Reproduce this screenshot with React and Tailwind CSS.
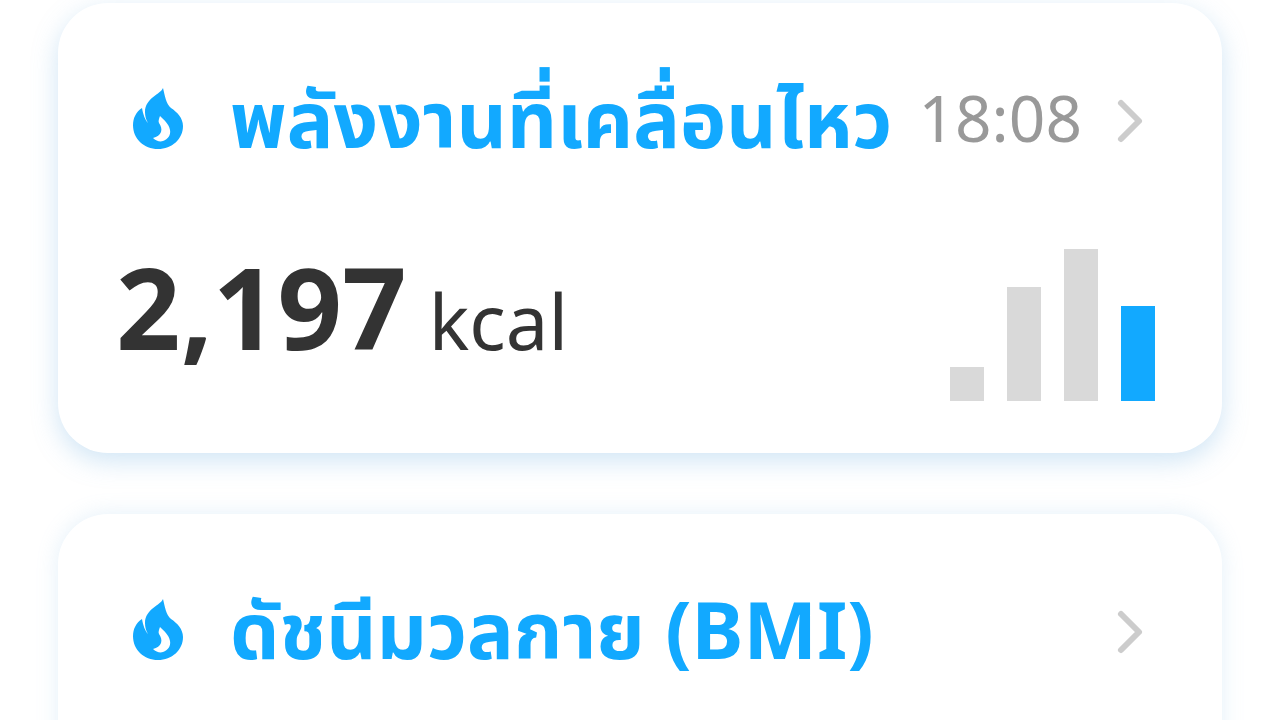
import { ChevronRight } from 'lucide-react';

const FONT = "font-['Noto_Sans','Noto_Sans_Thai','Noto_Sans_CJK_SC',sans-serif]";

const BARS = [
  { height: 'h-[34px]', color: 'bg-[#d9d9d9]' },
  { height: 'h-[114px]', color: 'bg-[#d9d9d9]' },
  { height: 'h-[152px]', color: 'bg-[#d9d9d9]' },
  { height: 'h-[95px]', color: 'bg-[#12a9ff]' },
];

function Flame() {
  return (
    <svg width="50" height="61" viewBox="0 0 50 61" className="shrink-0 ml-[1px]">
      <path
        fill="#12a9ff"
        fillRule="evenodd"
        d="M30 0C28 6 12 10 12 24C12 28 13 32 15 35C12 32 10 26 9 20C3 24 0 30 0 37C0 51 11 61 25 61C39 61 50 51 50 38C50 30 44 24 38 20C33 16 32 8 30 0ZM27 28C26 31 25 33 26 35C28 38 29 41 28 44C27 47 24 49 20 50C23 53 27 54 30 53C35 51 38 47 37 42C36 36 31 32 27 28Z"
      />
    </svg>
  );
}

function CardHeader({ title, time }) {
  return (
    <div className="flex items-center">
      <Flame />
      <span className="ml-[47px] text-[78px] leading-[84px] font-bold text-[#12a9ff] whitespace-nowrap">{title}</span>
      {time && <span className="ml-auto text-[64px] leading-[80px] text-[#999999]">{time}</span>}
      <ChevronRight
        size={72}
        strokeWidth={2}
        className={`mt-[6px] text-[#cccccc] shrink-0 mr-[-12px] ${time ? 'ml-[12px]' : 'ml-auto'}`}
      />
    </div>
  );
}

export default function App() {
  return (
    <div className={`h-[720px] w-[1280px] overflow-hidden bg-white ${FONT}`}>
      <div className="flex flex-col gap-[61px] px-[58px] pt-[3px]">

        {/* Active energy card */}
        <div className="h-[450px] rounded-[50px] bg-white pt-[73px] pl-[74px] pr-[68px] shadow-[0_8px_26px_rgba(120,180,225,0.35)]">
          <CardHeader title="พลังงานที่เคลื่อนไหว" time="18:08" />
          <div className="mt-[89px] flex items-end justify-between">
            <div className="flex items-baseline ml-[-16px] mb-[38px] text-[#333333]">
              <span className="text-[113px] leading-none font-bold">2,197</span>
              <span className="ml-[22px] text-[76px] leading-none">kcal</span>
            </div>
            <div className="flex items-end gap-[23px] mr-[-1px]">
              {BARS.map((bar, i) => (
                <div key={i} className={`w-[34px] ${bar.height} ${bar.color}`} />
              ))}
            </div>
          </div>
        </div>

        {/* BMI card */}
        <div className="h-[450px] rounded-[50px] bg-white pt-[73px] pl-[74px] pr-[68px] shadow-[0_0_22px_rgba(120,180,225,0.2)]">
          <CardHeader title="ดัชนีมวลกาย (BMI)" />
        </div>

      </div>
    </div>
  );
}
